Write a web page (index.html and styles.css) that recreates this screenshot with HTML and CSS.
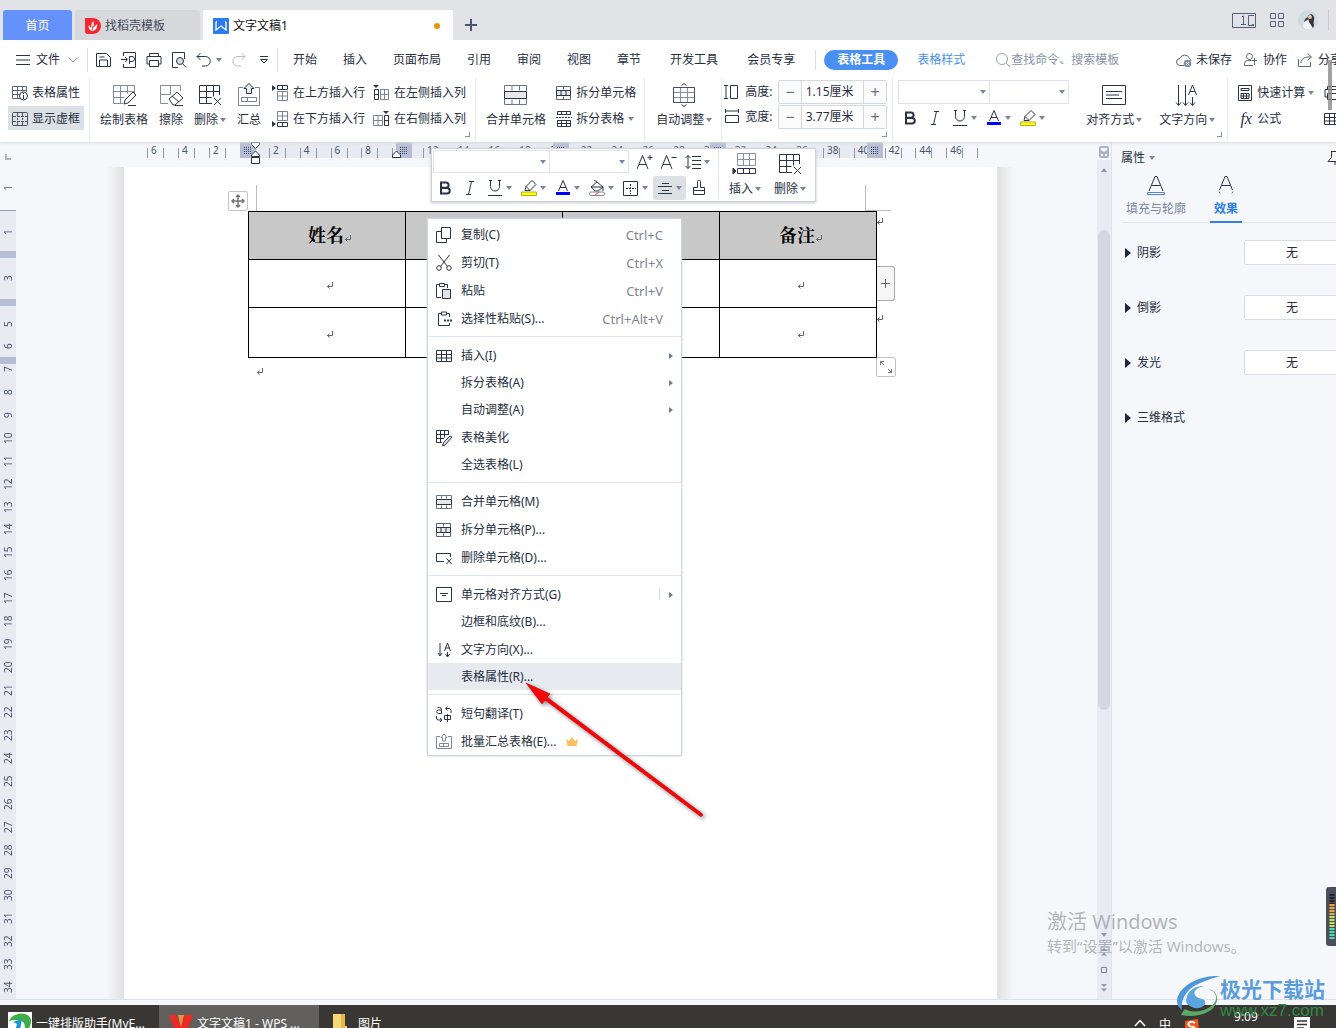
FILE: index.html
```html
<!DOCTYPE html>
<html lang="zh-CN">
<head>
<meta charset="utf-8">
<title>文字文稿1 - WPS</title>
<link rel="stylesheet" href="styles.css">
</head>
<body>
<svg class="sprite" aria-hidden="true">
  <symbol id="caret" viewBox="0 0 6 4"><path d="M0 0h6L3 4z" fill="#7b859b"/></symbol>
  <symbol id="ret" viewBox="0 0 8 7"><path d="M6.500 0v4.500H1M3.500 2.500L1.500 4.500 3.500 6.500" fill="none" stroke="#666"/></symbol>
  <symbol id="save" viewBox="0 0 16 16"><path d="M.500 1.500h10l4 4v9h-14zM3.500 14v-6h8v6M3.500 5h5"/></symbol>
  <symbol id="export" viewBox="0 0 16 16"><path d="M2.500 4V.500h12v15h-12V12M0 7.500h6M4 5l2.500 2.500L4 10M8.500 12V4.500h2.500a2 2 0 0 1 0 5H8.500"/></symbol>
  <symbol id="print" viewBox="0 0 16 16"><path d="M3.500 4V1.500h9V4M3.500 12h-2.500V4.500h14V12h-2.500M3.500 8.500h9v6h-9z"/></symbol>
  <symbol id="preview" viewBox="0 0 16 16"><path d="M7 15.500H1.500v-15h12V7"/><circle cx="9" cy="9" r="3.500" fill="#d8dbe2"/><path d="M11.500 11.500l3.500 4"/></symbol>
  <symbol id="undo" viewBox="0 0 16 16"><path d="M4.500 1L1 4.500 4.500 8M1 4.500h8.500a4.500 4.500 0 0 1 0 9.500H6"/></symbol>
  <symbol id="redo" viewBox="0 0 16 16"><path d="M10.500 1L14 4.500 10.500 8M14 4.500H6.500a4.500 4.500 0 0 0 0 9.500H10" stroke="#b8bcc4"/></symbol>
  <symbol id="tableinfo" viewBox="0 0 16 16"><path d="M14.500 7V1.500h-14v12H8M.500 5.500h14M.500 9.500H8M5.500 1.500v12M10.500 1.500v5" stroke="#5a6478"/><circle cx="11.500" cy="11" r="4" fill="#fff"/><path d="M11.500 10v4M11.500 8v1"/></symbol>
  <symbol id="dashtable" viewBox="0 0 16 16"><rect x=".500" y="1.500" width="15" height="13" rx="1" stroke="#4a5366"/><path d="M5.500 2v3M10.500 2v3M5.500 11v3M10.500 11v3M5.500 7v2M10.500 7v2M1 5.500h14M1 10.500h14" stroke-dasharray="3 1" stroke="#4a5366"/></symbol>
  <symbol id="grid" viewBox="0 0 16 16"><path d="M.500 2.500h15v11h-15zM.500 6.500h15M.500 10h15M5.500 2.500v11M10.500 2.500v11"/></symbol>
  <symbol id="rowup" viewBox="0 0 16 16"><path d="M0 0l4 3-4 3z" fill="#2b3346" stroke="none"/><path d="M5.500.500h10v4h-10zM10.500.500v4"/><path d="M5.500 6.500h10v9h-10zM5.500 11h10M10.500 6.500v9" stroke="#7a8294"/></symbol>
  <symbol id="rowdown" viewBox="0 0 16 16"><path d="M0 10l4 3-4 3z" fill="#2b3346" stroke="none"/><path d="M5.500 11.500h10v4h-10zM10.500 11.500v4"/><path d="M5.500.500h10v9h-10zM5.500 5h10M10.500.500v9" stroke="#7a8294"/></symbol>
  <symbol id="colleft" viewBox="0 0 16 16"><path d="M0 0h6L3 3z" fill="#2b3346" stroke="none"/><path d="M1.500 4.500h4v10h-4zM1.500 9.500h4"/><path d="M7.500 4.500h8v10h-8zM11.500 4.500v10M7.500 9.500h8" stroke="#7a8294"/></symbol>
  <symbol id="colright" viewBox="0 0 16 16"><path d="M10 0h6l-3 3z" fill="#2b3346" stroke="none"/><path d="M11.500 4.500h4v10h-4zM11.500 9.500h4"/><path d="M.500 4.500h9v10h-9zM5 4.500v10M.500 9.500h9" stroke="#7a8294"/></symbol>
  <symbol id="merge" viewBox="0 0 24 24"><path d="M.500 2.500h22v19h-22zM8 2.500v5M15.500 2.500v5M8 16.500v5M15.500 16.500v5" stroke="#6c7588"/><path d="M.500 8.500h22v7h-22z" fill="#e6e7ea"/></symbol>
  <symbol id="splitcell" viewBox="0 0 16 16"><path d="M.500 1.500h14v13h-14zM7.500 1.500v3M7.500 11.500v3" stroke="#5a6478"/><path d="M.500 5.500h14v5h-14zM5 5.500v5M10 5.500v5" fill="#e6e7ea"/></symbol>
  <symbol id="splittable" viewBox="0 0 16 16"><path d="M1.500 4V.500h13V4M1.500 3.500h13M5.500.500V4M10.500.500V4M1.500 9.500h13v6h-13zM1.500 12.500h13M5.500 9.500v6M10.500 9.500v6"/><path d="M0 6.500h16" stroke-dasharray="2 1"/></symbol>
  <symbol id="drawtable" viewBox="0 0 24 24"><path d="M22.500 11V2.500h-21v18H11M1.500 8.500h21M1.500 14.500h11M8.500 2.500v18M15.500 2.500v8" stroke="#858c9b"/><path d="M12 21l1-4 8-8 3 3-8 8-4 1zM16 22.500h8" fill="#fff"/></symbol>
  <symbol id="erase" viewBox="0 0 24 24"><path d="M21.500 8V2.500h-20v18H9M1.500 11.500h10M11.500 2.500v9" stroke="#858c9b"/><path d="M10 16l8-7 6 6-8 7h-2zM13 13l7 6M16 22.500h8" fill="#fff"/></symbol>
  <symbol id="deltable" viewBox="0 0 24 24"><path d="M21.500 12V2.500h-20v18H14M1.500 8.500h20M1.500 14.500h12M8.500 2.500v18M15.500 2.500v11"/><path d="M16 15l7 7M23 15l-7 7"/></symbol>
  <symbol id="collect" viewBox="0 0 24 24"><path d="M6 4.500H1.500v18h21v-18H18M4.500 14.500h15v4h-15zM10.500 14.500v4" stroke="#7a8294"/><path d="M9.500 10.500V5.500H7L12 .500l5 5h-2.500v5z" fill="#eceef1"/></symbol>
  <symbol id="collectsmall" viewBox="0 0 16 16"><path d="M4 2.500H.500v12h15v-12H12M3.500 9.500h9v3h-9zM7.500 9.500v3M6.500 7V3.500H5L8 0l3 3.500H9.500V7z" stroke="#7d8596"/></symbol>
  <symbol id="autofit" viewBox="0 0 24 24"><path d="M1.500 4.500h21v15h-21zM1.500 9.500h21M1.500 14.500h21M8.500 4.500v15M15.500 4.500v15" stroke="#8b91a0"/><path d="M1.500 4.500h21v15h-21z" stroke="#4a5366"/><path d="M9.500 2.500l2.500-2 2.500 2M9.500 21.500l2.500 2 2.500-2"/></symbol>
  <symbol id="rowheight" viewBox="0 0 16 16"><path d="M0 1.500h4M0 14.500h4M2 1.500v13M6.500 1.500h7v13h-7z"/></symbol>
  <symbol id="colwidth" viewBox="0 0 16 16"><path d="M1.500 0v4M14.500 0v4M1.500 2h13M1.500 6.500h13v7h-13z"/></symbol>
  <symbol id="bold" viewBox="0 0 16 16"><path d="M4 2.500h5a2.600 2.600 0 0 1 0 5.200H4zM4 8h6a2.700 2.700 0 0 1 0 5.500H4z" stroke-width="2"/></symbol>
  <symbol id="italic" viewBox="0 0 16 16"><path d="M7 1.500h5M4 14.500h5M9.500 1.500l-3 13"/></symbol>
  <symbol id="underline" viewBox="0 0 16 16"><path d="M3.500 0v6.500a4.500 4.500 0 0 0 9 0V0M1 15.500h14M2 .500h3M11 .500h3"/></symbol>
  <symbol id="fontcolor" viewBox="0 0 16 16"><path d="M3.500 11L8 .500 12.500 11M5 7.500h6"/><path d="M1 12h14v3H1z" fill="#00f" stroke="none"/></symbol>
  <symbol id="marker" viewBox="0 0 16 16"><path d="M4 10.500l1-4 6-6 4 4-6 6zM5 6.500l4 4"/><path d="M.500 12h15v3.500H.500z" fill="#ff0" stroke="#b3ad3a"/></symbol>
  <symbol id="fill" viewBox="0 0 16 16"><path d="M2 7l6-5 6 5-5 4H6zM8 2L5 0M14 7v4M2 7h12"/><rect x=".500" y="12" width="15" height="3.500" rx="1.500" fill="#fff" stroke="#888"/><path d="M6 15l4-3" stroke="#e44"/></symbol>
  <symbol id="border" viewBox="0 0 16 16"><path d="M.500 1.500h14v14h-14z"/><path d="M7.500 4v10M3 8.500h10" stroke-dasharray="2 1"/></symbol>
  <symbol id="center" viewBox="0 0 16 16"><path d="M5 3.500h7M1 6.500h14M5 10.500h7M1 13.500h14"/></symbol>
  <symbol id="brush" viewBox="0 0 16 16"><path d="M6.500 7.500v-6a1.500 1.500 0 0 1 3 0v6h4v7h-11v-7zM2.500 10.500h11"/></symbol>
  <symbol id="bigger" viewBox="0 0 16 16"><path d="M0 15L5.500 1.500 11 15M2 10.500h7.500M10.500 3.500h5M13 1v5"/></symbol>
  <symbol id="smaller" viewBox="0 0 16 16"><path d="M0 15L5.500 1.500 11 15M2 10.500h7.500M10.500 3.500h5"/></symbol>
  <symbol id="spacing" viewBox="0 0 16 16"><path d="M3 1.500v13M.500 4L3 1.500 5.500 4M.500 12L3 14.500 5.500 12M7 2.500h9M7 6.500h9M7 10.500h9M7 14.500h9"/></symbol>
  <symbol id="align" viewBox="0 0 24 24"><path d="M.500 2.500h23v19H.500zM4 8.500h16M4 12h13M4 15.500h16"/></symbol>
  <symbol id="textdir" viewBox="0 0 24 24"><path d="M3.500 2v20M1 19.500l2.500 3 2.500-3M10.500 2v20M8 19.500l2.500 3 2.500-3M17.500 14v8M15 19.500l2.500 3 2.500-3M13.500 12l4-10 4 10M15 8.500h5"/></symbol>
  <symbol id="calc" viewBox="0 0 16 16"><path d="M.500.500h13v15h-13zM3 3.500h8v2H3zM3 8.500h8v5H3zM3 11h8M5.500 8.500v5M8.500 8.500v5"/></symbol>
  <symbol id="search" viewBox="0 0 16 16"><circle cx="7" cy="7" r="5.500" stroke="#98a1b3"/><path d="M11 11l4 4" stroke="#98a1b3"/></symbol>
  <symbol id="cloud" viewBox="0 0 16 16"><path d="M8 13.500H4a3.500 3.500 0 0 1 0-7 5 5 0 0 1 9.500 0 3 3 0 0 1 1.500 2.500" stroke="#5d6678"/><circle cx="11.500" cy="11.500" r="3.800" fill="#8791a4" stroke="none"/><path d="M10 10l3 3M13 10l-3 3" stroke="#fff"/></symbol>
  <symbol id="people" viewBox="0 0 16 16"><circle cx="6.500" cy="4.500" r="3" stroke="#5d6678"/><path d="M10 13.500H1.500v-2a3 3 0 0 1 3-3h4M9 8.500h5M11.500 6v7" stroke="#5d6678"/></symbol>
  <symbol id="share" viewBox="0 0 16 16"><path d="M.500 7v7.500h12V10M3 11c0-4 3-6 8-6h2M9.500 1.500L13.500 5l-4 3.500" stroke="#5d6678"/></symbol>
  <symbol id="copy" viewBox="0 0 16 16"><path d="M5 4.500H.500v11h10V12M5.500.500h9v11h-9z"/></symbol>
  <symbol id="cut" viewBox="0 0 16 16"><path d="M2.500 0l9 11.500M13.500 0l-9 11.500"/><circle cx="3" cy="13" r="2.300"/><circle cx="13" cy="13" r="2.300"/></symbol>
  <symbol id="paste" viewBox="0 0 16 16"><path d="M5 14.500H.500v-13H3M9 1.500h2.500V5M3.500.500h5v3h-5z"/><path d="M6.500 6.500h8v9h-8z" fill="#e1e3e7"/></symbol>
  <symbol id="pastespecial" viewBox="0 0 16 16"><path d="M5 2.500H2.500v12h11V12M11 2.500h2.500V6M5.500 1h5v3h-5z"/><path d="M8 9.500h8" stroke-width="2" stroke-dasharray="2 1"/></symbol>
  <symbol id="beautify" viewBox="0 0 16 16"><path d="M12.500 5V.500H.500v12H6M.500 4.500h12M.500 8.500H8M4.500.500v12M8.500.500v7"/><path d="M8 12l6-6 2 1-6 7c-1 2-3 2-4 1 2 0 1-2 2-3z" fill="#dfe1e6"/></symbol>
  <symbol id="mergesmall" viewBox="0 0 16 16"><path d="M.500 1.500h15v13H.500zM5.500 1.500v3M10.500 1.500v3M5.500 11.500v3M10.500 11.500v3" stroke="#6c7588"/><path d="M.500 5.500h15v5H.500z" fill="#e9e6ea"/></symbol>
  <symbol id="delcell" viewBox="0 0 16 16"><path d="M8 11.500H.500v-8h14V7M10.500 8.500l5 5.500M15.500 8.500l-5 5.500"/></symbol>
  <symbol id="cellalign" viewBox="0 0 16 16"><path d="M.500.500h15v14H.500zM4 6.500h8M6 8.500h4"/></symbol>
  <symbol id="dirsmall" viewBox="0 0 16 16"><path d="M4 1v12M2 11l2 3 2-3M11.500 10v4M9.500 12l2 3 2-3M8.500 9l3-8 3 8M9.500 6h4"/></symbol>
  <symbol id="translate" viewBox="0 0 16 16"><path d="M1.500 1.500h2a2 2 0 0 1 2 2v4h-3a1.500 1.500 0 0 1 0-3.500h3M10 2.500h3a2 2 0 0 1 2 2V7M11.500.500l-2 2 2 2M.500 10v2a2 2 0 0 0 2 2h3M4 12l2 2-2 2M8.500 9.500h6v4h-6zM11.500 8v8"/></symbol>
  <symbol id="arrows4" viewBox="0 0 16 16"><path d="M8 2v12M2 8h12M6 4l2-2 2 2M6 12l2 2 2-2M4 6L2 8l2 2M12 6l2 2-2 2" stroke="#777" stroke-width="1.500"/></symbol>
</svg>

<div class="app">
  <header class="titlebar">
    <button class="doctab home">首页</button>
    <button class="doctab template"><svg width="16" height="16" viewBox="0 0 16 16"><path d="M0 0h8a8 8 0 0 1 0 16H3a3 3 0 0 1-3-3z" fill="#f5262f"/><path d="M7 13c-3-1-4-4-3-6l2 3c0-3 1-5 2-7 1 2 1 4 0 7l4-4c1 4-2 7-5 7z" fill="#fff"/><path d="M7 12l1-4" stroke="#f5262f"/></svg>找稻壳模板</button>
    <button class="doctab current"><svg width="16" height="16" viewBox="0 0 16 16"><rect width="16" height="16" rx="1" fill="#2b7bef"/><path d="M3 4v8l5-4 5 4V4M3 4h1M12 4h1" fill="none" stroke="#fff" stroke-width="1.300"/></svg>文字文稿1<span class="dirty"></span></button>
    <button class="newtab" aria-label="新建"><svg width="12" height="12" viewBox="0 0 12 12"><path d="M6 0v12M0 6h12" stroke="#4b5671" stroke-width="2"/></svg></button>
    <div class="winctl">
      <svg class="ic" width="24" height="15" viewBox="0 0 24 15"><path d="M.500.500h23v14H.500zM22 2.500h-5.500v10H22M9.500 4l2-1v8M9 11.500h5M20 11.500h2" stroke="#56627c"/></svg>
      <svg class="ic" width="14" height="14" viewBox="0 0 14 14"><path d="M.500.500h5v5h-5zM8.500.500h5v5h-5zM.500 8.500h5v5h-5zM8.500 8.500h5v5h-5z" stroke="#56627c"/></svg>
      <svg width="20" height="20" viewBox="0 0 20 20"><circle cx="10" cy="10" r="10" fill="#cddcde"/><path d="M5 17c0-5 3-7 6-7l3 8c-3 2-6 2-9-1z" fill="#eef4f5"/><path d="M10 6c3-4 7-1 6 4s1 5-1 8l-4-6z" fill="#3b3138"/><path d="M11 9l-5 3 1-3 4-3z" fill="#4a3c42"/><circle cx="12" cy="7" r="2" fill="#e7c3b4"/></svg>
    </div>
    <span class="winsep"></span>
  </header>

  <nav class="menubar">
    <button class="filebtn"><svg class="ic" width="14" height="10" viewBox="0 0 14 10"><path d="M0 .500h14M0 5h14M0 9.500h14"/></svg>文件<svg class="ic chev" width="10" height="6" viewBox="0 0 10 6"><path d="M.500.500L5 5 9.500.500" stroke="#8a93a5"/></svg></button>
    <div class="quick">
      <button aria-label="保存"><svg class="ic" width="16" height="16"><use href="#save"/></svg></button>
      <button aria-label="输出"><svg class="ic" width="16" height="16"><use href="#export"/></svg></button>
      <button aria-label="打印"><svg class="ic" width="16" height="16"><use href="#print"/></svg></button>
      <button aria-label="预览"><svg class="ic" width="16" height="16"><use href="#preview"/></svg></button>
      <button aria-label="撤销"><svg class="ic" width="16" height="16"><use href="#undo"/></svg><svg width="6" height="4"><use href="#caret"/></svg></button>
      <button aria-label="恢复"><svg class="ic" width="16" height="16"><use href="#redo"/></svg></button>
      <button class="more" aria-label="更多"><svg class="ic" width="8" height="8" viewBox="0 0 8 8"><path d="M0 .500h8M.500 3.500L4 7l3.500-3.500z"/></svg></button>
    </div>
    <div class="tabs">
      <a href="#">开始</a><a href="#">插入</a><a href="#">页面布局</a><a href="#">引用</a><a href="#">审阅</a><a href="#">视图</a><a href="#">章节</a>
    </div>
    <div class="tabs wide"><a href="#">开发工具</a><a href="#">会员专享</a></div>
    <div class="tooltabs"><a class="pill" href="#">表格工具</a><a class="style" href="#">表格样式</a></div>
    <label class="find"><svg class="ic" width="16" height="16"><use href="#search"/></svg><input type="text" placeholder="查找命令、搜索模板"></label>
    <div class="account">
      <button><svg class="ic" width="16" height="16"><use href="#cloud"/></svg>未保存</button>
      <button><svg class="ic" width="16" height="16"><use href="#people"/></svg>协作</button>
      <button><svg class="ic" width="16" height="16"><use href="#share"/></svg>分享</button>
    </div>
    <span class="sidegrip"></span>
  </nav>

  <section class="ribbon">
    <div class="group g-view">
      <div class="col">
        <button class="cmd"><svg class="ic" width="16" height="16"><use href="#tableinfo"/></svg>表格属性</button>
        <button class="cmd on"><svg class="ic" width="16" height="16"><use href="#dashtable"/></svg>显示虚框</button>
      </div>
    </div>
    <div class="group g-draw">
      <button class="big"><svg class="ic" width="24" height="24"><use href="#drawtable"/></svg><span>绘制表格</span></button>
      <button class="big"><svg class="ic" width="24" height="24"><use href="#erase"/></svg><span>擦除</span></button>
      <button class="big"><svg class="ic" width="24" height="24"><use href="#deltable"/></svg><span>删除<svg width="6" height="4"><use href="#caret"/></svg></span></button>
      <button class="big"><svg class="ic" width="24" height="24"><use href="#collect"/></svg><span>汇总</span></button>
      <div class="pair">
        <div class="col">
          <button class="cmd"><svg class="ic" width="16" height="16"><use href="#rowup"/></svg>在上方插入行</button>
          <button class="cmd"><svg class="ic" width="16" height="16"><use href="#rowdown"/></svg>在下方插入行</button>
        </div>
        <div class="col">
          <button class="cmd"><svg class="ic" width="16" height="16"><use href="#colleft"/></svg>在左侧插入列</button>
          <button class="cmd"><svg class="ic" width="16" height="16"><use href="#colright"/></svg>在右侧插入列</button>
        </div>
      </div>
      <i class="launch"></i>
    </div>
    <div class="group g-merge">
      <button class="big"><svg class="ic" width="24" height="24"><use href="#merge"/></svg><span>合并单元格</span></button>
      <div class="col">
        <button class="cmd"><svg class="ic" width="16" height="16"><use href="#splitcell"/></svg>拆分单元格</button>
        <button class="cmd"><svg class="ic" width="16" height="16"><use href="#splittable"/></svg>拆分表格<svg width="6" height="4"><use href="#caret"/></svg></button>
      </div>
    </div>
    <div class="group g-fit">
      <button class="big"><svg class="ic" width="24" height="24"><use href="#autofit"/></svg><span>自动调整<svg width="6" height="4"><use href="#caret"/></svg></span></button>
    </div>
    <div class="group g-size">
      <div class="col">
        <div class="sizerow"><svg class="ic" width="16" height="16"><use href="#rowheight"/></svg><label for="h">高度:</label><div class="stepper"><button>−</button><input id="h" type="text" value="1.15厘米"><button>+</button></div></div>
        <div class="sizerow"><svg class="ic" width="16" height="16"><use href="#colwidth"/></svg><label for="w">宽度:</label><div class="stepper"><button>−</button><input id="w" type="text" value="3.77厘米"><button>+</button></div></div>
      </div>
      <i class="launch"></i>
    </div>
    <div class="group g-font">
      <div class="col">
        <div class="combos"><select aria-label="字体"></select><select aria-label="字号"></select></div>
        <div class="fmt">
          <button aria-label="加粗"><svg class="ic" width="16" height="16"><use href="#bold"/></svg></button>
          <button aria-label="倾斜"><svg class="ic" width="16" height="16"><use href="#italic"/></svg></button>
          <button aria-label="下划线"><svg class="ic" width="16" height="16"><use href="#underline"/></svg><svg width="6" height="4"><use href="#caret"/></svg></button>
          <button aria-label="字体颜色"><svg class="ic" width="16" height="16"><use href="#fontcolor"/></svg><svg width="6" height="4"><use href="#caret"/></svg></button>
          <button aria-label="突出显示"><svg class="ic" width="16" height="16"><use href="#marker"/></svg><svg width="6" height="4"><use href="#caret"/></svg></button>
        </div>
      </div>
      <button class="big"><svg class="ic" width="24" height="24"><use href="#align"/></svg><span>对齐方式<svg width="6" height="4"><use href="#caret"/></svg></span></button>
      <button class="big"><svg class="ic" width="24" height="24"><use href="#textdir"/></svg><span>文字方向<svg width="6" height="4"><use href="#caret"/></svg></span></button>
      <i class="launch"></i>
    </div>
    <div class="group g-calc">
      <div class="col">
        <button class="cmd"><svg class="ic" width="16" height="16"><use href="#calc"/></svg>快速计算<svg width="6" height="4"><use href="#caret"/></svg></button>
        <button class="cmd"><span class="fx">fx</span>公式</button>
      </div>
      <div class="col">
        <button class="cmd" aria-label="重复标题"><svg class="ic" width="16" height="16"><use href="#print"/></svg></button>
        <button class="cmd" aria-label="转换"><svg class="ic" width="16" height="16"><use href="#grid"/></svg></button>
      </div>
    </div>
  </section>

  <main class="workspace">
    <div class="vruler">
      <div class="vtop"><span class="tabstop"></span><span class="vnum">1</span></div>
      <ol class="vnums">
        <li>1</li><li></li><li>3</li><li></li><li>5</li><li>6</li><li>7</li><li>8</li><li>9</li><li>10</li><li>11</li><li>12</li><li>13</li><li>14</li><li>15</li><li>16</li><li>17</li><li>18</li><li>19</li><li>20</li><li>21</li><li>22</li><li>23</li><li>24</li><li>25</li><li>26</li><li>27</li><li>28</li><li>29</li><li>30</li><li>31</li><li>32</li><li>33</li><li>34</li>
      </ol>
      <i class="rowmark r1"></i><i class="rowmark r2"></i><i class="rowmark r3"></i>
    </div>

    <div class="canvas">
      <div class="hruler">
        <ol class="hnums neg"><li>6</li><li>4</li><li>2</li></ol>
        <ol class="hnums pos"><li>2</li><li>4</li><li>6</li><li>8</li><li>10</li><li>12</li><li>14</li><li>16</li><li>18</li><li>20</li><li>22</li><li>24</li><li>26</li><li>28</li><li>30</li><li>32</li><li>34</li><li>36</li><li>38</li><li>40</li><li>42</li><li>44</li><li>46</li></ol>
        <i class="lasttick"></i>
        <i class="colmark c0"></i><i class="colmark c1"></i><i class="colmark c2"></i><i class="colmark c3"></i><i class="colmark c4"></i>
        <svg class="indent ic" width="10" height="23" viewBox="0 0 10 23"><path d="M.500.500h8v2L4.500 6.500.500 2.500zM.500 14.500V13l4-4 4 4v1.500zM.500 15.500h8v6h-8z" fill="#fff"/></svg>
        <svg class="rindent ic" width="10" height="8" viewBox="0 0 10 8"><path d="M.500 7.500V5l4-4 4 4v2.500z" fill="#fff"/></svg>
      </div>
      <article class="sheet">
        <i class="crop left"></i><i class="crop right"></i>
        <table class="doc">
          <thead><tr><th>姓名<svg width="8" height="7"><use href="#ret"/></svg></th><th></th><th></th><th>备注<svg width="8" height="7"><use href="#ret"/></svg></th></tr></thead>
          <tbody>
            <tr><td><svg width="8" height="7"><use href="#ret"/></svg></td><td></td><td></td><td><svg width="8" height="7"><use href="#ret"/></svg></td></tr>
            <tr><td><svg width="8" height="7"><use href="#ret"/></svg></td><td></td><td></td><td><svg width="8" height="7"><use href="#ret"/></svg></td></tr>
          </tbody>
        </table>
        <p class="after"><svg width="8" height="7"><use href="#ret"/></svg></p>
        <button class="handle move" aria-label="移动表格"><svg class="ic" width="16" height="16"><use href="#arrows4"/></svg></button>
        <svg class="endmark e1" width="8" height="7"><use href="#ret"/></svg>
        <svg class="endmark e2" width="8" height="7"><use href="#ret"/></svg>
        <button class="addcol" aria-label="添加列"><svg width="9" height="9" viewBox="0 0 9 9"><path d="M4.500 0v9M0 4.500h9" stroke="#666"/></svg></button>
        <button class="handle resize" aria-label="调整大小"><svg width="14" height="14" viewBox="0 0 14 14"><path d="M1.500 5V1.500H5M1.500 1.500L5 5M12.500 9v3.500H9M12.500 12.500L9 9" fill="none" stroke="#777"/></svg></button>

        <div class="minibar">
          <div class="minimain">
            <div class="minirow">
              <div class="combos"><select aria-label="字体"></select><select aria-label="字号"></select></div>
              <button aria-label="增大字号"><svg class="ic" width="16" height="16"><use href="#bigger"/></svg></button>
              <button aria-label="减小字号"><svg class="ic" width="16" height="16"><use href="#smaller"/></svg></button>
              <button aria-label="行距"><svg class="ic" width="16" height="16"><use href="#spacing"/></svg><svg width="6" height="4"><use href="#caret"/></svg></button>
            </div>
            <div class="fmt">
              <button aria-label="加粗"><svg class="ic" width="16" height="16"><use href="#bold"/></svg></button>
              <button aria-label="倾斜"><svg class="ic" width="16" height="16"><use href="#italic"/></svg></button>
              <button aria-label="下划线"><svg class="ic" width="16" height="16"><use href="#underline"/></svg><svg width="6" height="4"><use href="#caret"/></svg></button>
              <button aria-label="突出显示"><svg class="ic" width="16" height="16"><use href="#marker"/></svg><svg width="6" height="4"><use href="#caret"/></svg></button>
              <button aria-label="字体颜色"><svg class="ic" width="16" height="16"><use href="#fontcolor"/></svg><svg width="6" height="4"><use href="#caret"/></svg></button>
              <button aria-label="底纹"><svg class="ic" width="16" height="16"><use href="#fill"/></svg><svg width="6" height="4"><use href="#caret"/></svg></button>
              <button aria-label="边框"><svg class="ic" width="16" height="16"><use href="#border"/></svg><svg width="6" height="4"><use href="#caret"/></svg></button>
              <button class="active" aria-label="居中"><svg class="ic" width="16" height="16"><use href="#center"/></svg><svg width="6" height="4"><use href="#caret"/></svg></button>
              <button aria-label="格式刷"><svg class="ic" width="16" height="16"><use href="#brush"/></svg></button>
            </div>
          </div>
          <div class="minibig">
            <button class="big"><svg class="ic" width="24" height="24" viewBox="0 0 24 24"><path d="M4.500 1.500h18v12h-18zM4.500 7.500h18M10.500 1.500v12M16.500 1.500v12" stroke="#8b91a0"/><path d="M4.500 16.500h18v5h-18zM10.500 16.500v5M16.500 16.500v5"/><path d="M0 16l3 3-3 3z" fill="#2b3346"/></svg><span>插入<svg width="6" height="4"><use href="#caret"/></svg></span></button>
            <button class="big"><svg class="ic" width="24" height="24"><use href="#deltable"/></svg><span>删除<svg width="6" height="4"><use href="#caret"/></svg></span></button>
          </div>
        </div>

        <div class="menu" role="menu">
          <button class="item"><svg class="ic" width="16" height="16"><use href="#copy"/></svg>复制(C)<kbd>Ctrl+C</kbd></button>
          <button class="item"><svg class="ic" width="16" height="16"><use href="#cut"/></svg>剪切(T)<kbd>Ctrl+X</kbd></button>
          <button class="item"><svg class="ic" width="16" height="16"><use href="#paste"/></svg>粘贴<kbd>Ctrl+V</kbd></button>
          <button class="item"><svg class="ic" width="16" height="16"><use href="#pastespecial"/></svg>选择性粘贴(S)...<kbd>Ctrl+Alt+V</kbd></button>
          <hr>
          <button class="item sub"><svg class="ic" width="16" height="16"><use href="#grid"/></svg>插入(I)</button>
          <button class="item plain sub">拆分表格(A)</button>
          <button class="item plain sub">自动调整(A)</button>
          <button class="item"><svg class="ic" width="16" height="16"><use href="#beautify"/></svg>表格美化</button>
          <button class="item plain">全选表格(L)</button>
          <hr>
          <button class="item"><svg class="ic" width="16" height="16"><use href="#mergesmall"/></svg>合并单元格(M)</button>
          <button class="item"><svg class="ic" width="16" height="16"><use href="#splitcell"/></svg>拆分单元格(P)...</button>
          <button class="item"><svg class="ic" width="16" height="16"><use href="#delcell"/></svg>删除单元格(D)...</button>
          <hr>
          <button class="item sub split"><svg class="ic" width="16" height="16"><use href="#cellalign"/></svg>单元格对齐方式(G)</button>
          <button class="item plain">边框和底纹(B)...</button>
          <button class="item"><svg class="ic" width="16" height="16"><use href="#dirsmall"/></svg>文字方向(X)...</button>
          <button class="item plain hover">表格属性(R)...</button>
          <hr>
          <button class="item"><svg class="ic" width="16" height="16"><use href="#translate"/></svg>短句翻译(T)</button>
          <button class="item"><svg class="ic" width="16" height="16"><use href="#collectsmall"/></svg>批量汇总表格(E)...<svg class="crown" width="12" height="10" viewBox="0 0 12 10"><path d="M0 2l3 2 3-4 3 4 3-2-1.500 7h-9z" fill="#fdbf5e"/></svg></button>
        </div>

        <svg class="pointer" width="190" height="145" viewBox="0 0 190 145"><path d="M7 8l24 11-3 3 155 116.500a1.500 1.500 0 0 1-2 2.500L26 25l-3 4z" fill="#f90505" stroke="#c00606" stroke-width=".600"/></svg>
      </article>
    </div>

    <div class="scroll">
      <svg width="10" height="12" viewBox="0 0 10 12"><rect width="10" height="12" rx="2" fill="#aab3c9"/><path d="M2 2h6v2L5 6 2 4zM2 10V8h2v2zM6 10V8h2v2z" fill="#fff"/></svg>
      <svg class="up" width="6" height="4" viewBox="0 0 6 4"><path d="M0 4h6L3 0z" fill="#8c97ae"/></svg>
      <span class="thumb"></span>
      <div class="nav">
        <svg width="6" height="4" viewBox="0 0 6 4"><path d="M0 0h6L3 4z" fill="#8c97ae"/></svg>
        <svg width="6" height="8" viewBox="0 0 6 8"><path d="M0 3h6L3 0zM0 7.500h6l-3-3z" fill="#8c97ae"/></svg>
        <svg width="6" height="6" viewBox="0 0 6 6"><path d="M.500.500h5v5h-5z" fill="none" stroke="#7080a0"/></svg>
        <svg width="6" height="8" viewBox="0 0 6 8"><path d="M0 0h6L3 3zM0 4.500h6l-3 3z" fill="#8c97ae"/></svg>
      </div>
    </div>

    <aside class="panel">
      <div class="phead"><button>属性<svg width="6" height="4"><use href="#caret"/></svg></button><svg class="ic" width="14" height="14" viewBox="0 0 14 14"><path d="M3 .500h8M3.500.500v6L0 10.500h13M7 11v3"/></svg></div>
      <div class="ptabs">
        <button><svg class="ic" width="20" height="20" viewBox="0 0 20 20"><path d="M3 16L9 1.500h2L17 16M6 10.500h8"/><path d="M1.500 17.500h17v2h-17z" stroke="#4a86dd" fill="#fff"/></svg>填充与轮廓</button>
        <button class="sel"><svg class="ic" width="20" height="20" viewBox="0 0 20 20"><path d="M3.500 15L9 1.500h2L16.500 15M6 10.500h8"/><path d="M3 16.500l1 2M17 16.500l-1 2" stroke="#4a86dd"/></svg>效果</button>
      </div>
      <div class="prows">
        <div class="prow"><span>阴影</span><button>无</button></div>
        <div class="prow"><span>倒影</span><button>无</button></div>
        <div class="prow"><span>发光</span><button>无</button></div>
        <div class="prow"><span>三维格式</span></div>
      </div>
    </aside>
  </main>

  <div class="statusline"></div>
  <footer class="taskbar">
    <button class="task"><svg width="24" height="24" viewBox="0 0 24 24"><path d="M0 0h24v24H0z" fill="#fff"/><path d="M1 9C5-1 23-1 23 9c0 6-4 11-9 14 5-8 5-18-13-14z" fill="#3fae49"/><path d="M5 10l9-3-3 16H6l3-11z" fill="#1d95d4"/></svg><span>一键排版助手(MyE...</span></button>
    <button class="task front"><svg width="24" height="20" viewBox="0 0 24 20"><path d="M0 1h7l5 12 4-12h8l-7 18h-4l-2-5-2 5H7z" fill="#ee2a20"/><path d="M9 1h6l-3 12z" fill="#ff8a3c"/></svg><span>文字文稿1 - WPS ...</span></button>
    <button class="task folder"><svg width="15" height="20" viewBox="0 0 15 20"><path d="M0 0h12v12h2v8H0z" fill="#f9d776"/><path d="M8 0h4v18H8z" fill="#e5b84e"/></svg><span>图片</span></button>
    <div class="tray">
      <svg width="12" height="8" viewBox="0 0 12 8"><path d="M1 7l5-5.500L11 7" fill="none" stroke="#fff" stroke-width="1.500"/></svg>
      <span>中</span>
      <svg width="15" height="15" viewBox="0 0 15 15"><path d="M1 2l13-2 1 14-14 1z" fill="#f4551f"/><path d="M11 4C7 1 3 4 5 6.500s6 0 5.500 3.500S6 12 4 11" fill="none" stroke="#fff" stroke-width="2"/></svg>
      <time>9:09</time>
      <svg class="note" width="16" height="16" viewBox="0 0 16 16"><path d="M0 0h16v16H0z" fill="#fff"/><path d="M3 4h10M3 7.500h10M3 11h7" stroke="#333" stroke-width="1.500"/></svg>
    </div>
  </footer>

  <div class="activate"><strong>激活 Windows</strong><span>转到“设置”以激活 Windows。</span></div>
  <div class="sitemark">
    <svg width="44" height="40" viewBox="0 0 44 40"><path d="M44 0C22-1 2 11 1 25c0 4 2 7 5 9-2-9 4-20 14-25 6-3 13-6 24-9z" fill="#4b97da"/><path d="M11 28c-3-9 5-19 18-18-8 1-12 5-10 9 2 5 12 2 10 9-2 5-11 6-18 0z" fill="#5ba5df"/><path d="M32 13c14 4 9 19-8 22-7 1-12 0-15-2-2 2-3 4-4 6 14 3 33-1 36-14 1-7-3-11-9-12z" fill="#58a866"/></svg>
    <div><b>极光下载站</b><a href="#">www.xz7.com</a></div>
  </div>
  <svg class="meter" width="10" height="59" viewBox="0 0 10 59"><rect width="14" height="59" rx="3" fill="#4b4f5e"/><path d="M6 7v10" stroke="#22242c" stroke-width="5" stroke-dasharray="2 1"/><path d="M6 17v12" stroke="#f0a63c" stroke-width="5" stroke-dasharray="2 1"/><path d="M6 29v12" stroke="#c9e05a" stroke-width="5" stroke-dasharray="2 1"/><path d="M6 41v12" stroke="#4fdcae" stroke-width="5" stroke-dasharray="2 1"/></svg>
</div>
</body>
</html>
```
FILE: styles.css
```css
* { box-sizing: border-box; }

body {
  margin: 0;
  font: 12px/16px "Noto Sans", "Noto Sans CJK SC", sans-serif;
  color: #262e40;
  background: #f5f7fa;
}

button, input, select { font: inherit; color: inherit; border: 0; margin: 0; padding: 0; background: none; }
button { display: flex; align-items: center; white-space: nowrap; }
a { color: inherit; text-decoration: none; white-space: nowrap; }
ol { list-style: none; margin: 0; padding: 0; }
svg { flex: none; display: block; }
.sprite { position: absolute; width: 0; height: 0; }
.ic { fill: none; stroke: #2b3346; overflow: visible; }

.app { position: relative; display: flex; flex-direction: column; height: 100vh; overflow: hidden; }

/* Document tabs */
.titlebar { flex: none; display: flex; align-items: flex-end; gap: 3px; height: 40px; padding: 0 7px 0 3px; background: #e2e3e6; }
.doctab { height: 30px; border-radius: 3px 3px 0 0; gap: 4px; padding: 2px 10px 0; }
.home { width: 69px; justify-content: center; background: #6491fa; color: #fff; }
.template { width: 125px; background: #d7d8db; color: #444b5a; }
.current { width: 250px; background: #fff; color: #111; }
.dirty { width: 6px; height: 6px; margin: 0 3px 0 auto; border-radius: 50%; background: #e5960b; }
.newtab { height: 30px; padding: 0 9px; }
.winctl { display: flex; align-items: center; gap: 14px; height: 40px; margin-left: auto; }
.winsep { width: 1px; height: 20px; margin: 0 0 10px 7px; background: #c8cad0; }

/* Menu line */
.menubar { flex: none; position: relative; z-index: 2; display: flex; align-items: center; height: 38px; padding-top: 1px; background: #fff; }
.filebtn { width: 88px; height: 24px; padding-left: 16px; gap: 6px; border-right: 1px solid #dcdfe5; }
.chev { margin-left: 2px; }
.quick { display: flex; align-items: center; gap: 9px; height: 24px; width: 190px; padding-left: 8px; border-right: 1px solid #dcdfe5; }
.quick button { gap: 4px; }
.more { margin-left: 4px; }
.tabs { display: flex; gap: 26px; padding-top: 1px; padding-left: 15px; }
.tabs.wide { gap: 29px; padding-left: 29px; }
.tooltabs { display: flex; align-items: center; gap: 19px; height: 20px; margin-left: 20px; padding-left: 8px; border-left: 1px solid #dcdfe5; }
.pill { padding: 2px 13px; border-radius: 10px; background: #4a90f2; color: #fff; font-weight: 700; }
.style { color: #4a90f2; }
.find { display: flex; align-items: center; margin-left: 30px; }
.find input { width: 130px; }
.find input::placeholder { color: #8a93a6; opacity: 1; }
.account { display: flex; gap: 11px; margin: 0 -6px 0 auto; padding-top: 1px; }
.account button { gap: 4px; }
.sidegrip { position: absolute; right: 4px; top: 20px; width: 4px; height: 50px; background: #8a8a8acc; }

/* Ribbon */
.ribbon { flex: none; position: relative; display: flex; height: 64px; background: #fff; box-shadow: 0 1px 3px #d5d8de; z-index: 1; overflow: hidden; }
.group { flex: none; position: relative; display: flex; align-items: flex-start; padding-top: 2px; border-right: 1px solid #e9ebef; }
.col { display: flex; flex-direction: column; gap: 2px; }
.cmd { height: 24px; gap: 5px; padding-top: 1px; }
.cmd.on { background: #dce1e6; }
.big { flex-direction: column; gap: 5px; padding-top: 3px; }
.big span { display: flex; align-items: center; gap: 2px; }
.launch { position: absolute; right: 5px; bottom: 5px; width: 5px; height: 5px; border: solid #8a93a6; border-width: 0 1px 1px 0; }
.g-view { padding-left: 8px; padding-right: 5px; }
.g-view .cmd { padding: 1px 4px 0; gap: 4px; }
.g-draw { gap: 11px; padding-left: 10px; padding-right: 9px; }
.pair { display: flex; gap: 8px; }
.g-merge { gap: 10px; padding-left: 10px; padding-right: 8px; }
.g-merge .cmd { gap: 4px; }
.g-fit { padding-left: 11px; padding-right: 9px; }
.g-size { padding-left: 2px; padding-right: 5px; }
.g-size .col { gap: 1px; }
.sizerow { display: flex; align-items: center; height: 24px; }
.sizerow label { width: 38px; padding-left: 5px; }
.stepper { display: flex; height: 24px; border: 1px solid #d3d7de; border-radius: 2px; }
.stepper button { width: 22px; justify-content: center; font-size: 16px; color: #6c7280; background: #fbfbfc; }
.stepper input { width: 63px; text-align: center; border: solid #d3d7de; border-width: 0 1px; padding-right: 6px; }
.g-font { padding-left: 5px; padding-right: 12px; gap: 17px; }
.combos { display: flex; }
.combos select {
  appearance: none;
  width: 92px;
  height: 24px;
  border: 1px solid #dfe2e8;
  background: url("data:image/svg+xml,%3Csvg xmlns='http://www.w3.org/2000/svg' width='6' height='4'%3E%3Cpath d='M0 0h6L3 4z' fill='%237b859b'/%3E%3C/svg%3E") no-repeat right 3px center;
}
.combos select + select { width: 80px; margin-left: -1px; }
.fmt { display: flex; align-items: center; gap: 9px; height: 24px; padding-left: 4px; }
.fmt button, .minirow button { gap: 3px; }
.g-calc { padding-left: 10px; gap: 10px; border: 0; }
.g-calc .cmd { gap: 3px; }
.fx { width: 16px; font: italic 16px/16px "Liberation Serif", serif; }

/* Workspace */
.workspace { flex: 1; min-height: 0; display: flex; }
.vruler { flex: none; position: relative; display: flex; flex-direction: column; width: 16px; font-size: 10px; line-height: 12px; color: #4a556e; }
.vtop { height: 69px; border-bottom: 1px solid #8d9bb6; display: flex; flex-direction: column; align-items: center; gap: 25px; padding-top: 12px; }
.tabstop { width: 6px; height: 6px; border: solid #b0b5c2; border-width: 0 0 2px 2px; }
.vnum, .vnums li { writing-mode: vertical-rl; transform: rotate(180deg); }
.vnums { flex: 1; display: flex; flex-direction: column; padding-top: 10px; background: #e8ebf2; }
.vnums li { flex: 1; text-align: center; padding-left: 2px; padding-right: 2px; }
.rowmark { position: absolute; left: 0; width: 16px; height: 7px; background: #b7bed3; }
.r1 { top: 109px; }
.r2 { top: 157px; }
.r3 { top: 215px; }

.canvas { flex: 1; min-width: 0; display: flex; flex-direction: column; align-items: center; padding-left: 8px; }
.hruler { position: relative; flex: none; display: flex; width: 873px; height: 25px; padding-left: 23px; font-size: 10px; line-height: 16px; color: #4a556e; background: linear-gradient(#e8ebf2, #e8ebf2) 116px 0 / 643px 16px no-repeat; }
.hnums { display: flex; height: 16px; }
.hnums li { flex: 1; padding-left: 4px; background: linear-gradient(#8a97b0, #8a97b0) 0 6px / 1px 10px no-repeat, linear-gradient(#8a97b0, #8a97b0) 16px 6px / 1px 10px no-repeat; }
.hnums.neg { width: 93px; }
.hnums.pos { width: 708px; margin-left: 29px; }
.lasttick { width: 1px; height: 10px; margin-top: 6px; background: #8a97b0; }
.colmark {
  position: absolute;
  top: 0;
  width: 16px;
  height: 16px;
  border: solid #b7bed3;
  border-width: 5px 4px 4px;
  background: linear-gradient(90deg, transparent 1px, #b7bed3 1px) 0 0 / 2px 2px, linear-gradient(transparent 1px, #b7bed3 1px) 0 0 / 2px 2px, #3c4660;
}
.c0 { left: 116px; }
.c1 { left: 272px; }
.c2 { left: 429px; }
.c3 { left: 586px; }
.c4 { left: 743px; }
.indent { position: absolute; left: 127px; top: 0; }
.rindent { position: absolute; left: 268px; top: 8px; }

.sheet { position: relative; flex: 1; width: 873px; padding: 44px 0 0 124px; background: #fff; }
.sheet::before, .sheet::after { content: ""; position: absolute; top: 0; bottom: 0; width: 17px; }
.sheet::before { right: 100%; background: linear-gradient(to left, #dfe1e3, #f5f7fa); }
.sheet::after { left: 100%; background: linear-gradient(to right, #dfe1e3, #f5f7fa); }
.doc { width: 629px; table-layout: fixed; border-collapse: collapse; }
.doc th, .doc td { height: 48px; padding: 0 0 0 6px; border: 1px solid #000; text-align: center; vertical-align: middle; }
.doc tbody tr:last-child td { height: 50px; }
.doc th { background: #c8c8c8; font: 700 18px/24px "Liberation Serif", "Noto Serif CJK SC", "Noto Sans CJK SC", serif; color: #000; }
.doc td svg { margin: 4px auto 0; }
.doc th svg { display: inline-block; }
.after { margin: 10px 0 0 8px; }
.crop { position: absolute; top: 18px; height: 26px; border: solid #bcbcbc; border-width: 0; }
.crop.left { left: 132px; border-left-width: 1px; }
.crop.right { left: 741px; width: 26px; border-left-width: 1px; border-bottom-width: 1px; }
.handle { position: absolute; width: 20px; height: 20px; justify-content: center; border: 1px solid #c4c4c4; border-radius: 2px; background: #fff; }
.move { left: 104px; top: 24px; }
.resize { left: 752px; top: 190px; }
.endmark { position: absolute; left: 752px; }
.e1 { top: 51px; }
.e2 { top: 148px; }
.addcol { position: absolute; left: 753px; top: 99px; width: 18px; height: 35px; justify-content: center; border: 1px solid #a9a9a9; border-left: 0; border-radius: 0 3px 3px 0; background: #f6f6f6; }

/* Floating toolbar */
.minibar { position: absolute; z-index: 2; left: 307px; top: -19px; display: flex; width: 385px; height: 54px; padding: 1px; border: 1px solid #cfd2d8; background: #fff; box-shadow: 0 1px 3px #c4c7cd; }
.minimain { width: 286px; border-right: 1px solid #e1e4e9; }
.minirow { display: flex; align-items: center; gap: 8px; height: 23px; }
.minibar .combos select { width: 117px; height: 23px; }
.minibar .combos select + select { width: 80px; }
.fmt .active { background: #dce1e6; margin: 0 -4px; padding: 0 4px; height: 24px; border-radius: 2px; }
.minibar .fmt { height: 29px; }
.minibig { display: flex; gap: 13px; padding-left: 10px; }
.minibar .big { padding-top: 2px; gap: 5px; height: 49px; }

/* Context menu */
.menu { position: absolute; z-index: 2; left: 303px; top: 51px; width: 255px; padding: 1px 0 0; border: 1px solid #d0d5df; background: #fff; box-shadow: 0 0 2px #c9cfdb; }
.item { position: relative; width: 100%; height: 28px; padding: 1px 18px 0 8px; gap: 9px; }
.item.plain { height: 27px; padding-left: 33px; }
.item.hover { background: #e7eaef; }
.item kbd { margin-left: auto; font: inherit; font-size: 13px; color: #7f8490; }
.sub::after { content: ""; margin: 0 -10px 0 auto; border: solid transparent; border-width: 3px 0 3px 4px; border-left-color: #717b90; }
.split::before { content: ""; position: absolute; right: 21px; top: 8px; height: 12px; border-left: 1px solid #d8dbe1; }
.menu hr { height: 9px; margin: 0; border: 0; background: linear-gradient(#e2e5ea, #e2e5ea) 0 4px / 100% 1px no-repeat; }
.pointer { position: absolute; z-index: 3; left: 395px; top: 508px; filter: drop-shadow(2px 2px 2px #0007); }

/* Scroll column */
.scroll { flex: none; display: flex; flex-direction: column; align-items: center; width: 15px; padding: 4px 1px 7px 0; border-right: 1px solid #e0e3ea; background: linear-gradient(#f5f7fa 18px, #e8ebf2 18px); }
.up { margin-top: 10px; }
.thumb { width: 12px; height: 480px; margin-top: 58px; border-radius: 6px; background: #d4d7e0; }
.nav { display: flex; flex-direction: column; align-items: center; gap: 11px; margin-top: auto; }

/* Property panel */
.panel { flex: none; width: 224px; overflow: hidden; }
.phead { display: flex; justify-content: space-between; align-items: center; height: 31px; padding-left: 9px; margin-right: -6px; }
.phead button { gap: 4px; }
.ptabs { display: flex; gap: 24px; height: 50px; margin-left: 10px; padding-left: 4px; border-bottom: 1px solid #e1e4e9; }
.ptabs button { flex-direction: column; gap: 6px; padding: 2px 0 0; color: #7b869d; height: 50px; }
.ptabs .sel { padding: 2px 4px 0; color: #2f80e4; font-weight: 700; border-bottom: 2px solid #3480e3; }
.prows { padding-top: 2px; }
.prow { display: grid; grid-template-columns: 119px 96px; align-items: center; height: 55px; padding-left: 13px; }
.prow span { display: flex; align-items: center; gap: 6px; }
.prow span::before { content: ""; border: solid transparent; border-width: 5px 0 5px 6px; border-left-color: #1e2637; }
.prow button { justify-content: center; height: 25px; border: 1px solid #d9dce2; border-radius: 2px; background: #fff; }

/* Desktop taskbar */
.statusline { flex: none; height: 6px; border-top: 1px solid #dfe2e8; }
.taskbar { flex: none; display: flex; height: 23px; background: #393733; color: #fff; overflow: hidden; }
.task { width: 159px; height: 38px; padding-left: 8px; gap: 4px; }
.front { width: 160px; padding-left: 10px; background: #62605d; }
.folder { padding-left: 14px; gap: 10px; }
.tray { display: flex; align-items: flex-start; gap: 13px; width: 202px; height: 38px; margin-left: auto; padding-top: 12px; }
.tray svg { margin-top: 2px; }
.tray time { margin: -8px 23px 0 22px; }
.tray .note { margin-top: 0; }

/* Desktop overlays */
.activate { position: absolute; z-index: 4; right: 90px; bottom: 72px; width: 199px; color: #8b8d90a0; white-space: nowrap; font-size: 15px; line-height: 20px; }
.activate strong { display: block; font-size: 20px; line-height: 28px; font-weight: 400; }
.sitemark { position: absolute; z-index: 4; right: 10px; bottom: 8px; display: flex; width: 150px; }
.sitemark b { display: block; font-size: 21px; line-height: 26px; color: #5b9ddb; white-space: nowrap; }
.sitemark a { display: block; font: 17px/18px "Liberation Sans", sans-serif; color: #2c8a45; }
.meter { position: absolute; z-index: 4; right: 0; bottom: 82px; }
```
